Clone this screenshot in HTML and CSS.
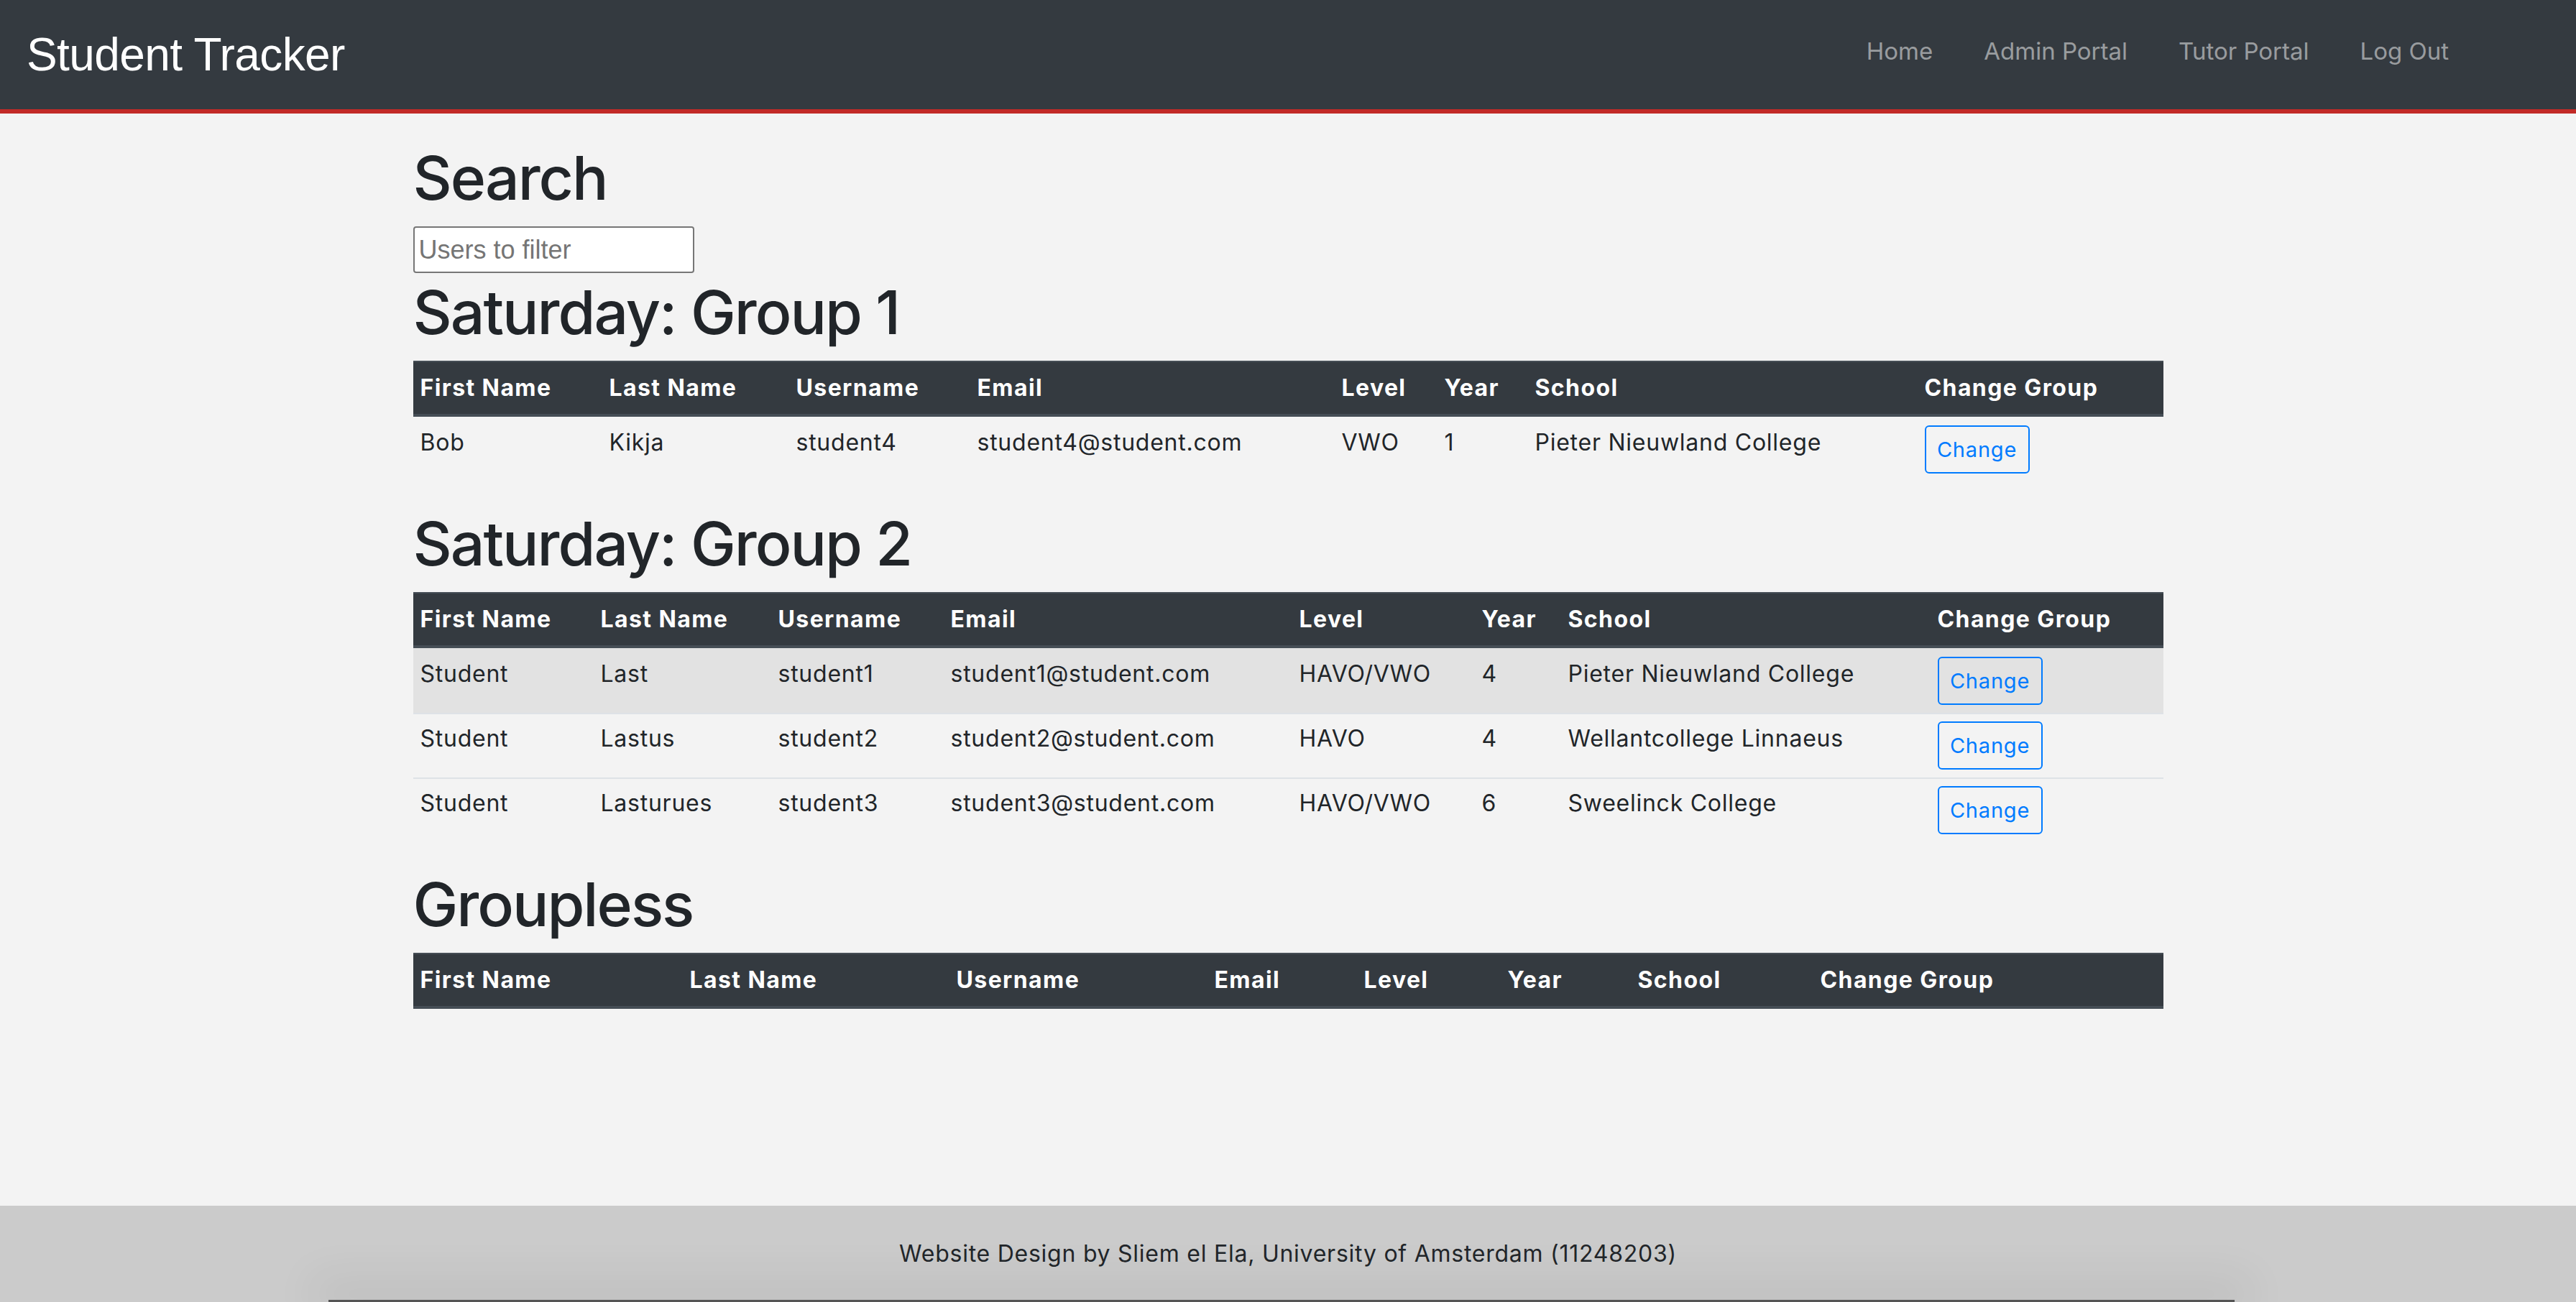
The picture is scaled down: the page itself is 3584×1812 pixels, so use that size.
FILE: index.html
```html
<!DOCTYPE html>
<html lang="en">
<head>
<meta charset="utf-8">
<title>Student Tracker</title>
<link rel="stylesheet" href="styles.css">
</head>
<body>
<nav class="navbar">
  <a class="brand" href="#">Student Tracker</a>
  <ul class="nav-links">
    <li><a href="#">Home</a></li>
    <li><a href="#">Admin Portal</a></li>
    <li><a href="#">Tutor Portal</a></li>
    <li><a href="#">Log Out</a></li>
  </ul>
</nav>

<main class="container">
  <h1>Search</h1>
  <input class="filter" type="text" placeholder="Users to filter">

  <h1>Saturday: Group 1</h1>
  <table class="tbl t1">
    <thead>
      <tr><th>First Name</th><th>Last Name</th><th>Username</th><th>Email</th><th>Level</th><th>Year</th><th>School</th><th>Change Group</th></tr>
    </thead>
    <tbody>
      <tr><td>Bob</td><td>Kikja</td><td>student4</td><td>student4@student.com</td><td>VWO</td><td>1</td><td>Pieter Nieuwland College</td><td><button class="btn-change">Change</button></td></tr>
    </tbody>
  </table>

  <h1>Saturday: Group 2</h1>
  <table class="tbl t2">
    <thead>
      <tr><th>First Name</th><th>Last Name</th><th>Username</th><th>Email</th><th>Level</th><th>Year</th><th>School</th><th>Change Group</th></tr>
    </thead>
    <tbody>
      <tr class="striped"><td>Student</td><td>Last</td><td>student1</td><td>student1@student.com</td><td>HAVO/VWO</td><td>4</td><td>Pieter Nieuwland College</td><td><button class="btn-change">Change</button></td></tr>
      <tr><td>Student</td><td>Lastus</td><td>student2</td><td>student2@student.com</td><td>HAVO</td><td>4</td><td>Wellantcollege Linnaeus</td><td><button class="btn-change">Change</button></td></tr>
      <tr><td>Student</td><td>Lasturues</td><td>student3</td><td>student3@student.com</td><td>HAVO/VWO</td><td>6</td><td>Sweelinck College</td><td><button class="btn-change">Change</button></td></tr>
    </tbody>
  </table>

  <h1>Groupless</h1>
  <table class="tbl t3">
    <thead>
      <tr><th>First Name</th><th>Last Name</th><th>Username</th><th>Email</th><th>Level</th><th>Year</th><th>School</th><th>Change Group</th></tr>
    </thead>
    <tbody></tbody>
  </table>
</main>

<footer class="footer">
  <p>Website Design by Sliem el Ela, University of Amsterdam (11248203)</p>
</footer>
</body>
</html>
```
FILE: styles.css
```css
* { box-sizing: border-box; }

html, body { margin: 0; padding: 0; }

body {
  background: #f3f3f3;
  color: #212529;
  font-family: Inter, "Noto Sans", sans-serif;
  font-size: 32px;
  line-height: 1.5;
  min-height: 100vh;
  display: flex;
  flex-direction: column;
}

/* Navbar */
.navbar {
  height: 158px;
  background: #343a40;
  border-bottom: 6px solid #c22a27;
  display: flex;
  align-items: center;
  justify-content: space-between;
  padding: 0 177px 0 37px;
}

.brand {
  font-family: "Liberation Sans", Arial, sans-serif;
  font-size: 64px;
  letter-spacing: -0.6px;
  line-height: 1;
  color: #fff;
  text-decoration: none;
}

.nav-links {
  list-style: none;
  margin: 0;
  padding: 0 0 10px 0;
  display: flex;
  gap: 71px;
}

.nav-links a {
  color: rgba(255, 255, 255, 0.5);
  text-decoration: none;
  font-size: 33px;
  line-height: 48px;
}

/* Content */
.container {
  flex: 1;
  width: 2435px;
  margin: 0 auto;
  padding-top: 38px;
}

h1 {
  font-size: 84px;
  font-weight: 500;
  letter-spacing: -2px;
  line-height: 104px;
  margin: 0 0 15px;
}

.filter {
  display: block;
  width: 391px;
  height: 65px;
  margin: 0 0 3px;
  padding: 0 6px;
  border: 2px solid #767676;
  border-radius: 4px;
  background: #fff;
  font-family: "Liberation Sans", Arial, sans-serif;
  font-size: 36px;
  color: #212529;
}

.filter::placeholder { color: #757575; }

/* Tables */
.tbl {
  width: 100%;
  table-layout: fixed;
  border-collapse: separate;
  border-spacing: 0;
  margin-bottom: 35px;
}

.tbl th {
  background: #343a40;
  color: #fff;
  font-weight: 700;
  letter-spacing: 1.4px;
  text-align: left;
  line-height: 48px;
  padding: 12px 10px;
  border-top: 2px solid #454d55;
  border-bottom: 4px solid #454d55;
  white-space: nowrap;
}

.tbl td {
  line-height: 48px;
  letter-spacing: 0.75px;
  padding: 10px 10px 11px;
  border-top: 2px solid #dee2e6;
  vertical-align: top;
  white-space: nowrap;
}

.tbl thead + tbody tr:first-child td { border-top-color: transparent; }

.tbl tr.striped td { background: #e2e2e2; border-top-color: #e2e2e2; }

.t1 th:nth-child(1) { width: 263px; }
.t1 th:nth-child(2) { width: 260px; }
.t1 th:nth-child(3) { width: 252px; }
.t1 th:nth-child(4) { width: 507px; }
.t1 th:nth-child(5) { width: 143px; }
.t1 th:nth-child(6) { width: 126px; }
.t1 th:nth-child(7) { width: 542px; }
.t1 th:nth-child(8) { width: 342px; }

.t2 th:nth-child(1) { width: 251px; }
.t2 th:nth-child(2) { width: 247px; }
.t2 th:nth-child(3) { width: 240px; }
.t2 th:nth-child(4) { width: 485px; }
.t2 th:nth-child(5) { width: 254px; }
.t2 th:nth-child(6) { width: 120px; }
.t2 th:nth-child(7) { width: 514px; }
.t2 th:nth-child(8) { width: 324px; }

.t3 th:nth-child(1) { width: 375px; }
.t3 th:nth-child(2) { width: 371px; }
.t3 th:nth-child(3) { width: 359px; }
.t3 th:nth-child(4) { width: 208px; }
.t3 th:nth-child(5) { width: 200px; }
.t3 th:nth-child(6) { width: 181px; }
.t3 th:nth-child(7) { width: 254px; }
.t3 th:nth-child(8) { width: 487px; }

.btn-change {
  display: block;
  width: 146px;
  height: 67px;
  padding: 0;
  border: 2px solid #007bff;
  border-radius: 6px;
  background: transparent;
  color: #007bff;
  font-family: Inter, "Noto Sans", sans-serif;
  font-size: 29px;
  letter-spacing: 0.8px;
  line-height: 63px;
  text-align: center;
}

/* Footer */
.footer {
  position: relative;
  height: 134px;
  background: #cbcbcb;
  display: flex;
  align-items: center;
  justify-content: center;
  overflow: hidden;
}

.footer p { margin: 0; letter-spacing: 0.75px; position: relative; z-index: 1; }

.footer::after {
  content: "";
  position: absolute;
  left: 457px;
  right: 475px;
  bottom: 0;
  height: 3px;
  background: #555;
  box-shadow: 0 -10px 60px 24px rgba(0, 0, 0, 0.06);
}
```
